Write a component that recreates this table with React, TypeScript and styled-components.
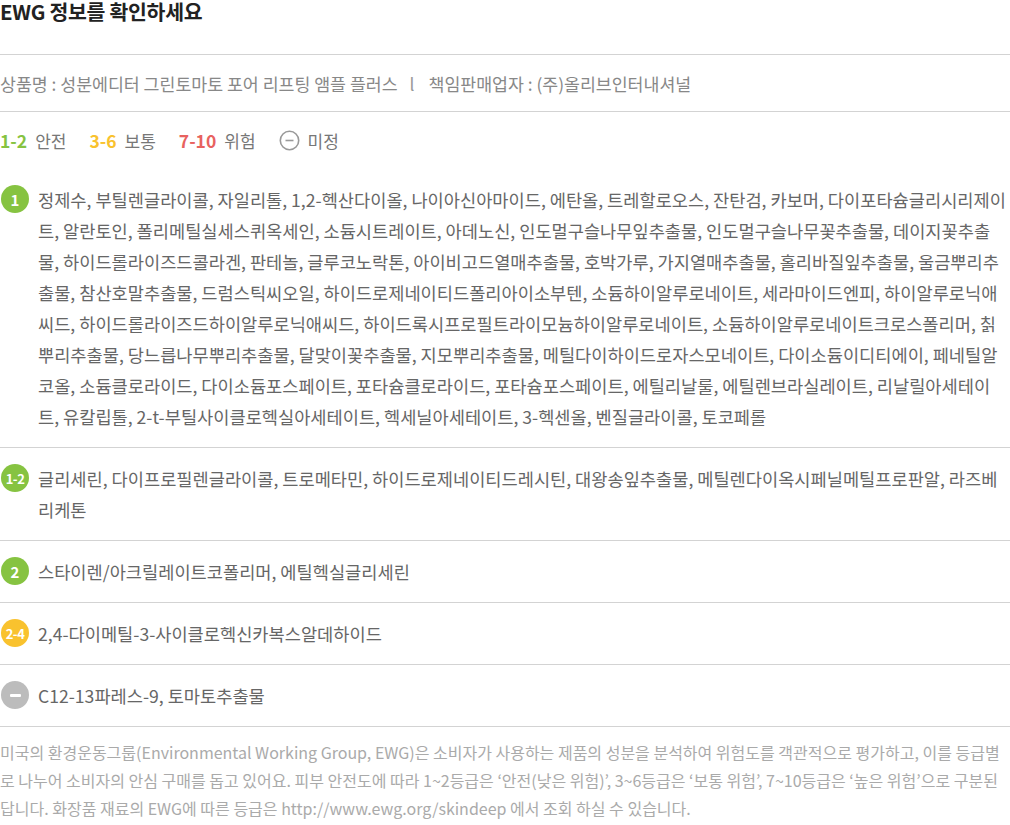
import React from "react";
import styled, { createGlobalStyle } from "styled-components";

const GlobalStyle = createGlobalStyle`
  html, body { margin: 0; padding: 0; background: #fff; }
  body { font-family: "Noto Sans CJK KR", "Noto Sans", sans-serif; }
`;

const Page = styled.div`
  width: 1010px;
  color: #666;
`;

const Title = styled.h2`
  margin: 0;
  height: 55px;
  box-sizing: border-box;
  padding-top: 0;
  font-size: 20.5px;
  line-height: 23px;
  font-weight: 700;
  color: #222;
  letter-spacing: -0.3px;
  border-bottom: 1px solid #d3d3d3;
`;

const InfoRow = styled.div`
  display: flex;
  align-items: center;
  height: 56px;
  font-size: 17.3px;
  color: #888;
  border-bottom: 1px solid #d3d3d3;
  white-space: pre;
`;

const Sep = styled.span`
  margin: 0 14px 0 12px;
  color: #999;
`;

const Legend = styled.div`
  display: flex;
  align-items: center;
  gap: 23px;
  height: 57px;
  font-size: 17px;
`;

const LegendItem = styled.div`
  display: flex;
  align-items: center;
  gap: 8px;
`;

const LegendRange = styled.span<{ $color: string }>`
  color: ${(p) => p.$color};
  font-weight: 700;
  font-size: 17.5px;
`;

const LegendLabel = styled.span`
  color: #777;
`;

const List = styled.div`
  display: flex;
  flex-direction: column;
`;

const Row = styled.div`
  display: flex;
  align-items: flex-start;
  gap: 9px;
  padding: 15px 0;
  border-bottom: 1px solid #d3d3d3;
`;

const Badge = styled.div<{ $color: string; $small?: boolean }>`
  flex: 0 0 28px;
  width: 28px;
  height: 28px;
  margin: 1px 0 0 1px;
  border-radius: 50%;
  background: ${(p) => p.$color};
  color: #fff;
  display: flex;
  align-items: center;
  justify-content: center;
  font-size: ${(p) => (p.$small ? "13px" : "15px")};
  font-weight: 700;
  letter-spacing: ${(p) => (p.$small ? "-0.5px" : "0")};
`;

const Dash = styled.span`
  display: block;
  width: 11px;
  height: 3px;
  border-radius: 1px;
  background: #fff;
`;

const Text = styled.div`
  flex: 1;
  font-size: 17.6px;
  line-height: 31px;
  color: #666;
  word-break: break-all;
`;

const Footer = styled.p`
  margin: 0;
  padding-top: 11px;
  font-size: 16px;
  line-height: 28px;
  color: #aaa;
  word-break: break-all;
`;

const MinusCircle = () => (
  <svg width="21" height="21" viewBox="0 0 21 21">
    <circle cx="10.5" cy="10.5" r="9.2" fill="none" stroke="#999" strokeWidth="1.6" />
    <line x1="6.5" y1="10.5" x2="14.5" y2="10.5" stroke="#999" strokeWidth="1.6" />
  </svg>
);

const GREEN = "#86c341";
const YELLOW = "#f9c22e";
const RED = "#e8625f";
const GRAY = "#bcbcbc";

type Group = { label: string; color: string; small?: boolean; dash?: boolean; text: string };

const groups: Group[] = [
  {
    label: "1",
    color: GREEN,
    text:
      "정제수, 부틸렌글라이콜, 자일리톨, 1,2-헥산다이올, 나이아신아마이드, 에탄올, 트레할로오스, 잔탄검, 카보머, 다이포타슘글리시리제이트, 알란토인, 폴리메틸실세스퀴옥세인, 소듐시트레이트, 아데노신, 인도멀구슬나무잎추출물, 인도멀구슬나무꽃추출물, 데이지꽃추출물, 하이드롤라이즈드콜라겐, 판테놀, 글루코노락톤, 아이비고드열매추출물, 호박가루, 가지열매추출물, 홀리바질잎추출물, 울금뿌리추출물, 참산호말추출물, 드럼스틱씨오일, 하이드로제네이티드폴리아이소부텐, 소듐하이알루로네이트, 세라마이드엔피, 하이알루로닉애씨드, 하이드롤라이즈드하이알루로닉애씨드, 하이드록시프로필트라이모늄하이알루로네이트, 소듐하이알루로네이트크로스폴리머, 칡뿌리추출물, 당느릅나무뿌리추출물, 달맞이꽃추출물, 지모뿌리추출물, 메틸다이하이드로자스모네이트, 다이소듐이디티에이, 페네틸알코올, 소듐클로라이드, 다이소듐포스페이트, 포타슘클로라이드, 포타슘포스페이트, 에틸리날룰, 에틸렌브라실레이트, 리날릴아세테이트, 유칼립톨, 2-t-부틸사이클로헥실아세테이트, 헥세닐아세테이트, 3-헥센올, 벤질글라이콜, 토코페롤",
  },
  {
    label: "1-2",
    color: GREEN,
    small: true,
    text:
      "글리세린, 다이프로필렌글라이콜, 트로메타민, 하이드로제네이티드레시틴, 대왕송잎추출물, 메틸렌다이옥시페닐메틸프로판알, 라즈베리케톤",
  },
  { label: "2", color: GREEN, text: "스타이렌/아크릴레이트코폴리머, 에틸헥실글리세린" },
  { label: "2-4", color: YELLOW, small: true, text: "2,4-다이메틸-3-사이클로헥신카복스알데하이드" },
  { label: "", color: GRAY, dash: true, text: "C12-13파레스-9, 토마토추출물" },
];

export default function App() {
  return (
    <Page>
      <GlobalStyle />
      <Title>EWG 정보를 확인하세요</Title>
      <InfoRow>
        상품명 : 성분에디터 그린토마토 포어 리프팅 앰플 플러스
        <Sep>l</Sep>
        책임판매업자 : (주)올리브인터내셔널
      </InfoRow>
      <Legend>
        <LegendItem>
          <LegendRange $color={GREEN}>1-2</LegendRange>
          <LegendLabel>안전</LegendLabel>
        </LegendItem>
        <LegendItem>
          <LegendRange $color={YELLOW}>3-6</LegendRange>
          <LegendLabel>보통</LegendLabel>
        </LegendItem>
        <LegendItem>
          <LegendRange $color={RED}>7-10</LegendRange>
          <LegendLabel>위험</LegendLabel>
        </LegendItem>
        <LegendItem>
          <MinusCircle />
          <LegendLabel>미정</LegendLabel>
        </LegendItem>
      </Legend>
      <List>
        {groups.map((g, i) => (
          <Row key={i}>
            <Badge $color={g.color} $small={g.small}>
              {g.dash ? <Dash /> : g.label}
            </Badge>
            <Text>{g.text}</Text>
          </Row>
        ))}
      </List>
      <Footer>
        미국의 환경운동그룹(Environmental Working Group, EWG)은 소비자가 사용하는 제품의 성분을 분석하여 위험도를 객관적으로 평가하고, 이를 등급별로 나누어 소비자의 안심 구매를 돕고 있어요. 피부 안전도에 따라 1~2등급은 ‘안전(낮은 위험)’, 3~6등급은 ‘보통 위험’, 7~10등급은 ‘높은 위험’으로 구분된답니다. 화장품 재료의 EWG에 따른 등급은 http://www.ewg.org/skindeep 에서 조회 하실 수 있습니다.
      </Footer>
    </Page>
  );
}
